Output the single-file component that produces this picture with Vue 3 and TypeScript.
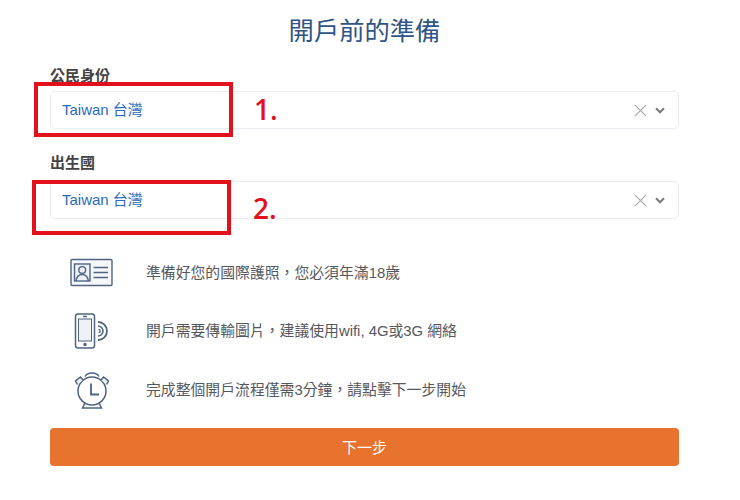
<script setup lang="ts">
interface Field { label: string; value: string; mark: string }
const fields: Field[] = [
  { label: '公民身份', value: 'Taiwan 台灣', mark: '1.' },
  { label: '出生國', value: 'Taiwan 台灣', mark: '2.' },
]
const tips = [
  { icon: 'card', text: '準備好您的國際護照\uFF0C您必須年滿18歲' },
  { icon: 'phone', text: '開戶需要傳輸圖片\uFF0C建議使用wifi, 4G或3G 網絡' },
  { icon: 'clock', text: '完成整個開戶流程僅需3分鐘\uFF0C請點擊下一步開始' },
]
</script>

<template>
  <main class="page">
    <h1 class="title">開戶前的準備</h1>
    <section v-for="(f, i) in fields" :key="f.label" class="field" :class="`field-${i + 1}`">
      <div class="label">{{ f.label }}</div>
      <div class="select">
        <span class="value">{{ f.value }}</span>
        <svg class="clear" width="13" height="13" viewBox="0 0 13 13" fill="none" stroke="#a6a6a6" stroke-width="1.1">
          <path d="M.8.8l11.4 11.4M12.2.8L.8 12.2" />
        </svg>
        <svg class="chev" width="10" height="7" viewBox="0 0 10 7" fill="none" stroke="#7c7c7c" stroke-width="2.1">
          <path d="M1 1.2l4 4 4-4" />
        </svg>
      </div>
      <div class="redbox" />
      <div class="mark">{{ f.mark }}</div>
    </section>

    <ul class="tips">
      <li v-for="t in tips" :key="t.icon" class="tip">
        <span class="icon">
          <svg v-if="t.icon === 'card'" width="44" height="30" viewBox="0 0 44 30" fill="none" stroke="#4f6480" stroke-width="1.4">
            <rect x="1" y="1.5" width="41" height="26" rx="1" fill="#f6f7fa" />
            <rect x="4.5" y="6" width="15.5" height="17" fill="#eef1f6" />
            <circle cx="12.2" cy="12" r="3.4" />
            <path d="M6 23c.6-4 3-6.5 6.2-6.5s5.6 2.5 6.2 6.5" />
            <path d="M23.5 9.5h14.5M23.5 14.5h14.5M23.5 19.5h14.5" stroke-width="1.5" />
          </svg>
          <svg v-else-if="t.icon === 'phone'" width="36" height="36" viewBox="0 0 36 36" fill="none" stroke="#4f6480" stroke-width="1.5">
            <rect x="1.5" y="1" width="19" height="34" rx="2.5" />
            <rect x="4.5" y="6" width="13" height="22" fill="#eef1f6" stroke-width="1" />
            <path d="M9 3.5h4" />
            <circle cx="11" cy="31.5" r="1" fill="#4f6480" />
            <path d="M24 9a9 9 0 0 1 0 18" stroke-width="1.8" />
            <path d="M24 13a5 5 0 0 1 0 10" stroke-width="1.6" />
            <path d="M24.5 16.3a1.7 1.7 0 0 1 0 3.4" stroke-width="1.3" />
          </svg>
          <svg v-else width="36" height="40" viewBox="0 0 36 40" fill="none" stroke="#4f6480" stroke-width="1.5">
            <circle cx="18" cy="21" r="14" />
            <path d="M11 6.5a7.5 5.5 0 0 1 14 0" />
            <path d="M3.5 14.5L1.5 11l5-4 2.5 3" fill="#eef1f6" />
            <path d="M32.5 14.5l2-3.5-5-4-2.5 3" fill="#eef1f6" />
            <path d="M17 13.5v11h8" stroke-width="1.8" />
            <path d="M11 33l-2.5 5h19L25 33" />
          </svg>
        </span>
        <span class="tip-text">{{ t.text }}</span>
      </li>
    </ul>

    <button class="next" type="button">下一步</button>
  </main>
</template>

<style>
html, body { margin: 0; background: #fff; }
</style>

<style scoped>
.page {
  box-sizing: border-box;
  width: 740px;
  height: 500px;
  padding: 0 61px 0 50px;
  font-family: "Liberation Sans", "Noto Sans CJK TC", sans-serif;
  overflow: hidden;
}
.title {
  margin: 0;
  padding-top: 14px;
  height: 53px;
  box-sizing: border-box;
  text-align: center;
  font-size: 25.3px;
  line-height: 34px;
  font-weight: 400;
  color: #2f5587;
}
.field { position: relative; }
.field-1 { padding-top: 14px; }
.field-2 { padding-top: 25px; }
.label {
  height: 24px;
  font-size: 15px;
  line-height: 18px;
  font-weight: 700;
  color: #444;
}
.select {
  box-sizing: border-box;
  height: 38px;
  display: flex;
  align-items: center;
  padding: 0 13px 0 11px;
  border: 1px solid #e9ecf1;
  border-radius: 5px;
  background: #fff;
}
.field-2 .select { margin-top: 3px; margin-bottom: 1px; }
.value {
  flex: 1;
  font-size: 15px;
  color: #2a6bbd;
  margin-top: -4px;
}
.clear { margin-right: 8px; }
.redbox {
  position: absolute;
  box-sizing: border-box;
  border: 4px solid #e3111c;
  width: 199px;
  height: 55px;
  left: -16px;
  top: 29px;
}
.field-2 .redbox { left: -18px; top: 51px; }
.mark {
  position: absolute;
  left: 204px;
  top: 39px;
  font-size: 28px;
  line-height: 34px;
  font-weight: 600;
  color: #e3111c;
  font-family: "Open Sans", sans-serif;
}
.field-2 .mark { left: 203px; top: 62px; }
.tips {
  list-style: none;
  margin: 0;
  padding: 22px 0 0 0;
}
.tip {
  display: flex;
  align-items: center;
  height: 58.5px;
}
.icon {
  width: 84px;
  margin-right: 12px;
  margin-top: 3px;
  display: flex;
  justify-content: center;
}
.tip-text {
  font-size: 14.85px;
  color: #55585e;
}
.next {
  display: block;
  width: 100%;
  height: 38px;
  margin-top: 10px;
  border: 0;
  border-radius: 4px;
  background: #e8732e;
  color: #fff;
  font-family: inherit;
  font-size: 15px;
}
</style>
